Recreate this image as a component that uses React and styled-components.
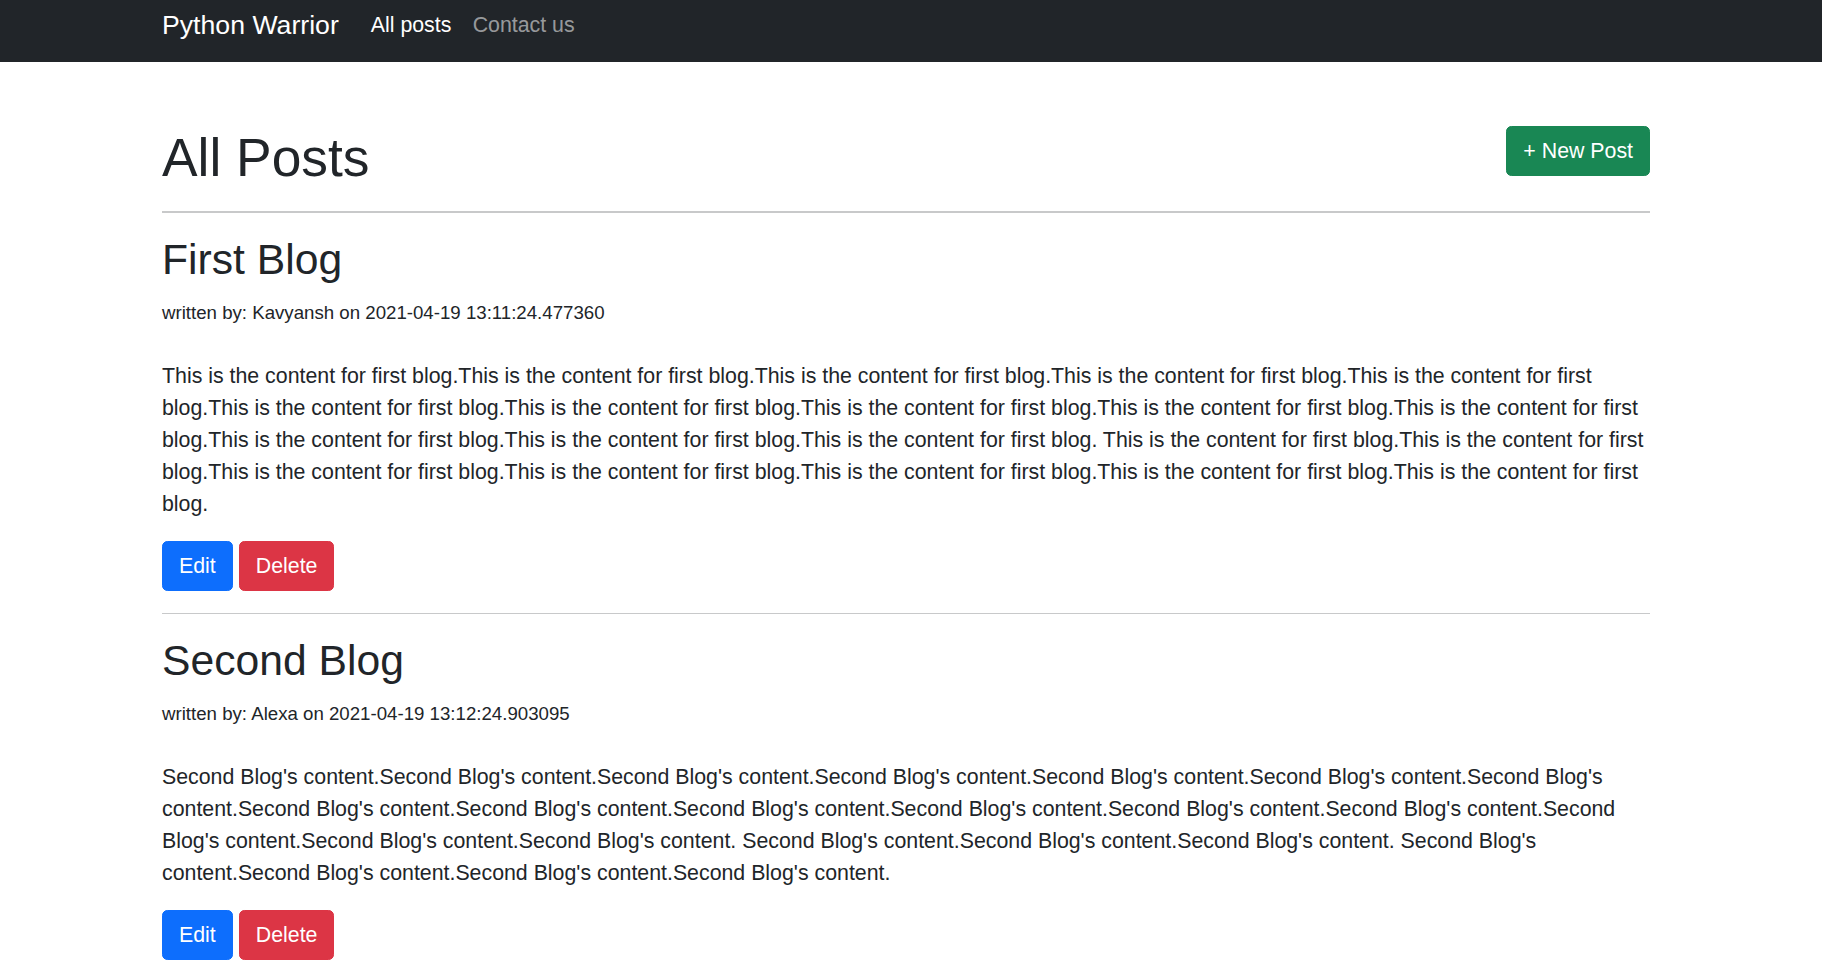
import React from "react";
import styled, { createGlobalStyle } from "styled-components";

const GlobalStyle = createGlobalStyle`
  * { box-sizing: border-box; }
  html, body { margin: 0; padding: 0; background: #fff; }
  body {
    font-family: "Liberation Sans", Arial, sans-serif;
    font-size: 21.333px;
    line-height: 1.5;
    color: #212529;
  }
`;

const Navbar = styled.nav`
  background: #212529;
  height: 62px;
  padding-top: 5px;
`;

const NavInner = styled.div`
  width: 1488px;
  margin-left: 162px;
  height: 40px;
  display: flex;
  align-items: center;
`;

const Brand = styled.a`
  font-size: 26.667px;
  line-height: 40px;
  color: #fff;
  text-decoration: none;
  margin-right: 21.333px;
  white-space: nowrap;
`;

const NavList = styled.div`
  display: flex;
  align-items: center;
`;

const NavLink = styled.a`
  font-size: 21.333px;
  line-height: 32px;
  padding: 0 10.667px;
  text-decoration: none;
  color: ${(p) => (p.$active ? "#ffffff" : "rgba(255,255,255,0.55)")};
`;

const Main = styled.main`
  width: 1488px;
  margin-left: 162px;
  padding-top: 64px;
`;

const HeaderRow = styled.div`
  display: flex;
  justify-content: space-between;
  align-items: flex-start;
`;

const PageTitle = styled.h1`
  margin: 0;
  font-size: 53.333px;
  line-height: 64px;
  font-weight: 500;
`;

const Divider = styled.hr`
  border: 0;
  margin: 21.333px 0;
  height: 1.333px;
  background: #c8c9ca;
`;

const PostTitle = styled.h2`
  margin: 0 0 10.667px;
  font-size: 42.667px;
  line-height: 51.2px;
  font-weight: 500;
`;

const Meta = styled.p`
  margin: 0 0 31px;
  line-height: 32px;
  small { font-size: 18.667px; }
`;

const Content = styled.p`
  margin: 0 0 21.333px;
  line-height: 32px;
`;

const Actions = styled.div`
  display: flex;
  gap: 6px;
`;

const colors = {
  primary: "#0d6efd",
  danger: "#dc3545",
  success: "#198754",
};

const Button = styled.a`
  display: inline-block;
  font-size: 21.333px;
  line-height: 32px;
  padding: 8px 16px;
  border: 1.333px solid ${(p) => colors[p.$variant]};
  background: ${(p) => colors[p.$variant]};
  color: #fff;
  border-radius: 5.333px;
  text-decoration: none;
  white-space: nowrap;
  cursor: pointer;
`;

const rep = (s, n) => Array(n).fill(s).join("");

const firstItem = "This is the content for first blog.";
const first = rep(firstItem, 13) + " " + rep(firstItem, 7);

const secondItem = "Second Blog's content.";
const second =
  rep(secondItem, 16) + " " + rep(secondItem, 3) + " " + rep(secondItem, 4);

const posts = [
  { id: 1, title: "First Blog", author: "Kavyansh", date: "2021-04-19 13:11:24.477360", content: first },
  { id: 2, title: "Second Blog", author: "Alexa", date: "2021-04-19 13:12:24.903095", content: second },
];

export default function App() {
  return (
    <>
      <GlobalStyle />
      <Navbar>
        <NavInner>
          <Brand href="#">Python Warrior</Brand>
          <NavList>
            <NavLink href="#" $active>All posts</NavLink>
            <NavLink href="#">Contact us</NavLink>
          </NavList>
        </NavInner>
      </Navbar>
      <Main>
        <HeaderRow>
          <PageTitle>All Posts</PageTitle>
          <Button $variant="success">+ New Post</Button>
        </HeaderRow>
        <Divider />
        {posts.map((p) => (
          <article key={p.id}>
            <PostTitle>{p.title}</PostTitle>
            <Meta>
              <small>written by: {p.author} on {p.date}</small>
            </Meta>
            <Content>{p.content}</Content>
            <Actions>
              <Button $variant="primary">Edit</Button>
              <Button $variant="danger">Delete</Button>
            </Actions>
            <Divider />
          </article>
        ))}
      </Main>
    </>
  );
}
